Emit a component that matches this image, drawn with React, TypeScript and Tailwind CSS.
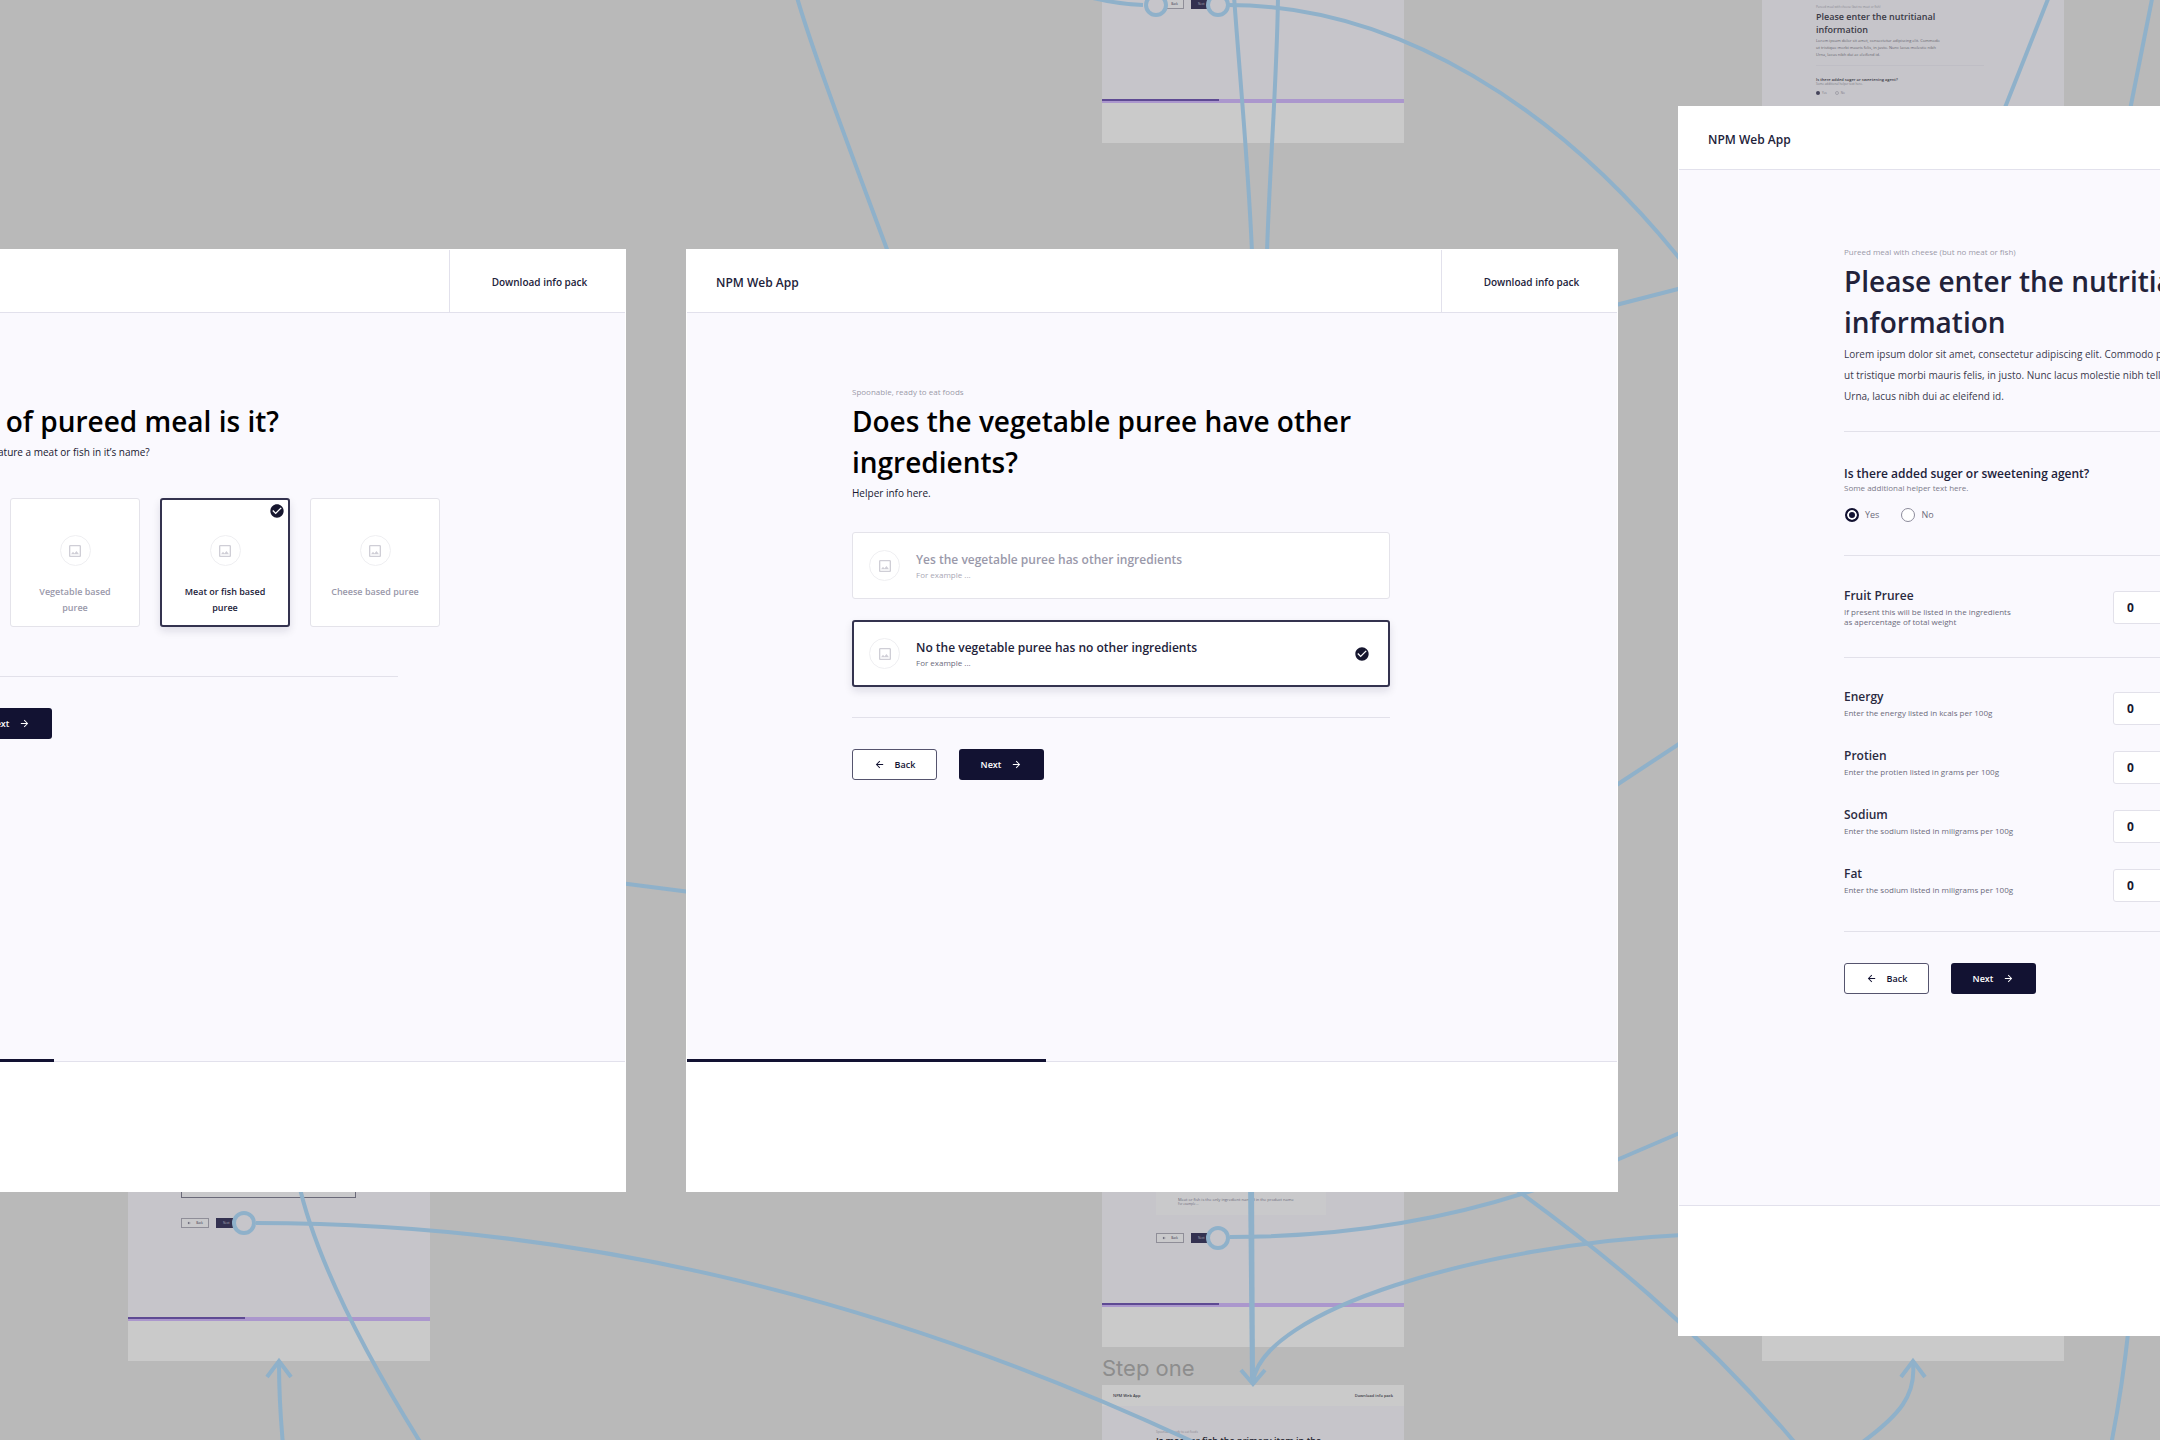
import React from "react";
import {
  MdArrowBack,
  MdArrowForward,
  MdCheckCircle,
  MdOutlineImage,
} from "react-icons/md";

/* ---------- Shared pieces of a board ---------- */

function Board({
  children,
  progress,
  className = "",
  bodyClass = "",
}: {
  children: React.ReactNode;
  progress: number;
  className?: string;
  bodyClass?: string;
}) {
  return (
    <article
      className={`flex w-[932px] shrink-0 flex-col border border-white bg-white ${className}`}
    >
      <header className="flex h-[63px] items-stretch justify-between border-b border-[#e2e1ec]">
        <span className="flex items-center pt-[3px] pl-[29px] text-[12px] font-semibold text-[#22223a]">
          NPM Web App
        </span>
        <a
          href="#info-pack"
          className="flex w-[176px] items-center justify-center border-l border-[#e2e1ec] pt-[3px] pl-1 text-[10px] font-semibold text-[#22223a]"
        >
          Download info pack
        </a>
      </header>
      <div className={`bg-[#faf9fe] pl-[165px] ${bodyClass}`}>
        <div className="w-[538px]">{children}</div>
      </div>
      <div
        role="progressbar"
        aria-label="Progress"
        aria-valuenow={progress}
        className="flex h-[3px] bg-[#faf9fe]"
      >
        <div className="bg-[#121232]" style={{ width: `${progress}%` }} />
        <div className="flex-1 border-b border-[#e2e1ec]" />
      </div>
      <footer className="h-[129px] bg-white" />
    </article>
  );
}

function Caption({ children }: { children: React.ReactNode }) {
  return (
    <p className="mb-[3px] text-[8px] leading-[12px] text-[#9b99a9]">
      {children}
    </p>
  );
}

function Divider({ className = "" }: { className?: string }) {
  return <hr className={`border-t border-[#e2e1ea] ${className}`} />;
}

function NavButtons() {
  return (
    <div className="mt-[31px] flex gap-[22px]">
      <button
        type="button"
        className="flex h-[31px] w-[85px] items-center justify-center gap-[10px] rounded-[3px] border border-[#55546e] bg-white text-[9px] font-semibold text-[#121232]"
      >
        <MdArrowBack className="size-[11px]" aria-hidden />
        Back
      </button>
      <button
        type="button"
        className="flex h-[31px] w-[85px] items-center justify-center gap-[10px] rounded-[3px] bg-[#121232] text-[9px] font-semibold text-white"
      >
        Next
        <MdArrowForward className="size-[11px]" aria-hidden />
      </button>
    </div>
  );
}

function Placeholder() {
  return (
    <span className="flex size-[31px] shrink-0 items-center justify-center rounded-full border border-[#efeff2]">
      <MdOutlineImage className="size-[16px] text-[#cfced6]" aria-hidden />
    </span>
  );
}

const selectedBox =
  "border-2 border-[#34334f] shadow-[0_4px_8px_rgba(20,20,50,0.12)]";
const idleBox = "border border-[#e4e3ea]";

function MealCard({ label, selected }: { label: string; selected?: boolean }) {
  return (
    <label
      className={`relative flex h-[129px] w-[130px] shrink-0 flex-col items-center rounded-[3px] bg-white ${
        selected ? `pt-[35px] ${selectedBox}` : `pt-[36px] ${idleBox}`
      }`}
    >
      <input
        type="radio"
        name="meal"
        defaultChecked={selected}
        className="sr-only"
      />
      <Placeholder />
      {selected && (
        <MdCheckCircle
          className="absolute top-[3px] right-[3px] size-[16px] text-[#17172f]"
          aria-hidden
        />
      )}
      <span
        className={`mt-[18px] w-[92px] text-center text-[9px] leading-[16px] font-semibold ${
          selected ? "text-[#22223a]" : "text-[#9a99aa]"
        }`}
      >
        {label}
      </span>
    </label>
  );
}

function OptionRow({ label, selected }: { label: string; selected?: boolean }) {
  return (
    <label
      className={`flex h-[67px] items-center rounded-[3px] bg-white ${
        selected ? `pr-[18px] pl-[15px] ${selectedBox}` : `px-[16px] ${idleBox}`
      }`}
    >
      <input
        type="radio"
        name="ingredients"
        defaultChecked={selected}
        className="sr-only"
      />
      <Placeholder />
      <span className="ml-[16px] flex flex-1 flex-col">
        <span
          className={`text-[12px] leading-[18px] font-semibold ${
            selected ? "text-[#22223a]" : "text-[#9a99aa]"
          }`}
        >
          {label}
        </span>
        <span
          className={`text-[8px] leading-[12px] ${
            selected ? "text-[#6c6b7c]" : "text-[#a9a8b5]"
          }`}
        >
          For example ...
        </span>
      </span>
      {selected && (
        <MdCheckCircle className="size-[16px] text-[#17172f]" aria-hidden />
      )}
    </label>
  );
}

function Radio({ label, checked }: { label: string; checked?: boolean }) {
  return (
    <label className="flex items-center gap-[6px] text-[9px] leading-[14px] text-[#6c6b7c]">
      <input
        type="radio"
        name="sweetener"
        defaultChecked={checked}
        className="size-[14px] appearance-none rounded-full border border-[#8c8b9b] bg-white checked:border-2 checked:border-[#121232] checked:bg-[#121232] checked:shadow-[inset_0_0_0_2px_#fff]"
      />
      {label}
    </label>
  );
}

function Field({
  id,
  label,
  lines,
}: {
  id: string;
  label: string;
  lines: string[];
}) {
  return (
    <div className="grid grid-cols-2 items-start">
      <div>
        <label
          htmlFor={id}
          className="block text-[12px] leading-[18px] font-semibold text-[#2a2a40]"
        >
          {label}
        </label>
        <p className="mt-[2px] text-[8px] leading-[10px] text-[#6c6b7c]">
          {lines.map((line) => (
            <span key={line} className="block">
              {line}
            </span>
          ))}
        </p>
      </div>
      <input
        id={id}
        type="text"
        defaultValue="0"
        className="mt-1 h-[33px] w-[120px] rounded-[3px] border border-[#e2e1ea] bg-white px-[13px] text-[12px] font-bold text-[#17172f]"
      />
    </div>
  );
}

/* ---------- Dimmed prototype map behind the boards ---------- */

function MiniButtons({ className = "" }: { className?: string }) {
  return (
    <div className={`flex gap-[7px] text-[3px] leading-[3px] ${className}`}>
      <span className="flex h-[10px] w-[28px] items-center justify-center gap-[5px] border border-[#8f8e98] bg-[#c9c9cb] text-[#33324a]">
        <MdArrowBack className="size-[4px]" aria-hidden />
        Back
      </span>
      <span className="flex h-[10px] w-[28px] items-center bg-[#333150] pl-[7px] text-[#a9a8b5]">
        Next
      </span>
    </div>
  );
}

function MiniProgress() {
  return (
    <div className="h-[4px] bg-[#ab97cd]">
      <div className="h-[2px] w-[38.6%] bg-[#5e4a93]" />
    </div>
  );
}

function MiniFrame({
  className,
  children,
}: {
  className: string;
  children?: React.ReactNode;
}) {
  return (
    <div className={`absolute w-[302px] bg-[#c6c5ca] ${className}`}>
      {children}
    </div>
  );
}

const connectors = [
  "M796 -6 C812 50 850 150 888 252",
  "M1234 -4 C1240 80 1248 160 1252 252",
  "M1278 -4 C1277 80 1270 160 1267 252",
  "M1228 5 C1400 5 1560 110 1680 259",
  "M1085 -4 Q1115 4 1143 5",
  "M1612 306 L1682 288",
  "M1612 788 L1682 742",
  "M620 883 L690 892",
  "M1612 1162 L1682 1132",
  "M298 1180 C312 1245 350 1330 422 1445",
  "M256 1223 C560 1223 870 1290 1200 1445",
  "M283 1445 Q279 1400 279 1364",
  "M267 1377 L279 1361 L291 1377",
  "M1250 1180 L1252 1382",
  "M1252 1180 L1253 1382",
  "M1241 1370 L1253 1384 L1265 1370",
  "M1253 1382 C1262 1310 1480 1245 1682 1235",
  "M1230 1237 C1340 1237 1440 1222 1540 1188",
  "M1510 1185 C1600 1250 1700 1330 1796 1444",
  "M1860 1444 C1900 1415 1916 1395 1913 1364",
  "M1901 1377 L1913 1361 L1925 1377",
  "M2050 -6 L2004 110",
  "M2153 -6 L2130 110",
  "M2129 1325 Q2122 1390 2111 1445",
];

function PrototypeMap() {
  return (
    <div className="absolute inset-0" aria-hidden>
      <MiniFrame className="top-0 left-[1102px]">
        <MiniButtons className="-mt-px ml-[54px]" />
        <div className="mt-[90px]">
          <MiniProgress />
        </div>
        <div className="h-[40px] bg-[#cacaca]" />
      </MiniFrame>

      <MiniFrame className="top-0 left-[1762px] h-[110px] pl-[54px]">
        <p className="mt-[5px] text-[3px] leading-[4px] text-[#8a8993]">
          Pureed meal with cheese (but no meat or fish)
        </p>
        <p className="mt-px text-[9px] leading-[13px] font-semibold text-[#3a3a46]">
          Please enter the nutritianal
          <br />
          information
        </p>
        <p className="mt-px text-[4px] leading-[7px] text-[#66656f]">
          Lorem ipsum dolor sit amet, consectetur adipiscing elit. Commodo
          <br />
          ut tristique morbi mauris felis, in justo. Nunc lacus molestie nibh
          <br />
          Urna, lacus nibh dui ac eleifend id.
        </p>
        <div className="mt-[7px] w-[168px] border-t border-[#bfbec5]" />
        <p className="mt-[11px] text-[4px] leading-[6px] font-semibold text-[#3a3a46]">
          Is there added suger or sweetening agent?
        </p>
        <p className="text-[3px] leading-[3px] text-[#7c7b86]">
          Some additional helper text here.
        </p>
        <div className="mt-[5px] flex items-center text-[3px] leading-[4px] text-[#7c7b86]">
          <span className="mr-[2px] size-[4px] rounded-full bg-[#45445a]" />
          Yes
          <span className="mr-[2px] ml-[8px] size-[4px] rounded-full border border-[#a3a2ab]" />
          No
        </div>
      </MiniFrame>

      <MiniFrame className="top-[1180px] left-[128px]">
        <div className="ml-[53px] h-[18px] w-[175px] border border-t-0 border-[#6a6978] bg-[#c9c9cb]" />
        <MiniButtons className="mt-[20px] ml-[53px]" />
        <div className="mt-[89px]">
          <MiniProgress />
        </div>
        <div className="h-[40px] bg-[#cacaca]" />
      </MiniFrame>

      <MiniFrame className="top-[1180px] left-[1102px]">
        <div className="ml-[54px] h-[35px] w-[170px] bg-[#c9c9cb] pt-[17px] pl-[22px] text-[#6c6b7c]">
          <p className="text-[4px] leading-[5px]">
            Meat or fish is the only ingredient named in the product name
          </p>
          <p className="text-[3px] leading-[4px]">For example ...</p>
        </div>
        <MiniButtons className="mt-[18px] ml-[54px]" />
        <div className="mt-[60px]">
          <MiniProgress />
        </div>
        <div className="h-[40px] bg-[#cacaca]" />
      </MiniFrame>

      <div className="absolute top-[1354px] left-[1102px] font-[Inter,sans-serif] text-[22px] leading-[28px] text-[#8d8d8d]">
        Step one
      </div>

      <MiniFrame className="top-[1385px] left-[1102px] h-[80px]">
        <div className="flex h-[21px] items-center justify-between bg-[#cacaca] px-[11px] text-[4px] font-semibold text-[#3a3a46]">
          <span>NPM Web App</span>
          <span>Download info pack</span>
        </div>
        <p className="mt-[24px] ml-[54px] text-[3px] leading-[4px] text-[#8a8993]">
          Spoonable, ready to eat foods
        </p>
        <p className="ml-[54px] text-[9px] leading-[13px] font-semibold whitespace-nowrap text-[#25252f]">
          Is meat or fish the primary item in the
        </p>
      </MiniFrame>

      <div className="absolute top-[1325px] left-[1762px] h-[36px] w-[302px] bg-[#cacaca]" />

      <svg
        className="absolute top-0 left-0 h-[1440px] w-[2160px]"
        viewBox="0 0 2160 1440"
        fill="none"
        stroke="#8fb1ca"
        strokeWidth="4"
      >
        {connectors.map((d) => (
          <path key={d} d={d} />
        ))}
        <g fill="#c6c5ca">
          <circle cx="1156" cy="5" r="10" />
          <circle cx="1218" cy="5" r="10" />
          <circle cx="244" cy="1223" r="10" />
          <circle cx="1218" cy="1238" r="10" />
        </g>
      </svg>
    </div>
  );
}

/* ---------- Page ---------- */

const headingClass = "text-[28px] leading-[41px] font-semibold";

export default function App() {
  return (
    <main className="relative h-screen overflow-hidden bg-[#b9b9b9] font-['Open_Sans',sans-serif]">
      <PrototypeMap />

      <div className="relative -ml-[306px] flex items-start gap-[60px] pt-[106px]">
        <Board progress={38.6} className="mt-[143px]" bodyClass="h-[746px] pt-[73px]">
          <Caption>Pureed meals</Caption>
          <h1 className={`${headingClass} text-black`}>
            What type of pureed meal is it?
          </h1>
          <p className="text-[10px] leading-[21px] whitespace-nowrap text-[#17172f]">
            Does the puree meal name feature a meat or fish in it’s name?
          </p>
          <div className="mt-[35px] flex gap-[20px]">
            <MealCard label="Fruit based puree" />
            <MealCard label="Vegetable based puree" />
            <MealCard label="Meat or fish based puree" selected />
            <MealCard label="Cheese based puree" />
          </div>
          <Divider className="mt-[49px]" />
          <NavButtons />
        </Board>

        <Board progress={38.6} className="mt-[143px]" bodyClass="h-[746px] pt-[73px]">
          <Caption>Spoonable, ready to eat foods</Caption>
          <h1 className={`${headingClass} text-black`}>
            Does the vegetable puree have other ingredients?
          </h1>
          <p className="text-[10px] leading-[21px] text-[#17172f]">
            Helper info here.
          </p>
          <div className="mt-[28px] flex flex-col gap-[21px]">
            <OptionRow label="Yes the vegetable puree has other ingredients" />
            <OptionRow
              label="No the vegetable puree has no other ingredients"
              selected
            />
          </div>
          <Divider className="mt-[30px]" />
          <NavButtons />
        </Board>

        <Board progress={0} bodyClass="h-[1033px] pt-[76px]">
          <Caption>Pureed meal with cheese (but no meat or fish)</Caption>
          <h1 className={`${headingClass} text-[#22223a]`}>
            Please enter the nutritianal
            <br />
            information
          </h1>
          <p className="mt-px text-[10px] leading-[21px] whitespace-nowrap text-[#3a3a4e]">
            Lorem ipsum dolor sit amet, consectetur adipiscing elit. Commodo
            pellentesque
            <br />
            ut tristique morbi mauris felis, in justo. Nunc lacus molestie nibh
            tellus quam.
            <br />
            Urna, lacus nibh dui ac eleifend id.
          </p>
          <Divider className="mt-[24px]" />

          <fieldset className="mt-[33px]">
            <legend className="text-[12px] leading-[18px] font-semibold text-[#22223a]">
              Is there added suger or sweetening agent?
            </legend>
            <p className="text-[8px] leading-[10px] text-[#7c7b8a]">
              Some additional helper text here.
            </p>
            <div className="mt-[15px] flex gap-[22px] pl-px">
              <Radio label="Yes" checked />
              <Radio label="No" />
            </div>
          </fieldset>
          <Divider className="mt-[33px]" />

          <div className="pt-[31px] pb-[30px]">
            <Field
              id="fruit"
              label="Fruit Pruree"
              lines={[
                "If present this will be listed in the ingredients",
                "as apercentage of total weight",
              ]}
            />
          </div>
          <Divider />

          <div className="flex flex-col gap-[22px] pt-[30px] pb-[29px]">
            <Field
              id="energy"
              label="Energy"
              lines={["Enter the energy listed in kcals per 100g"]}
            />
            <Field
              id="protien"
              label="Protien"
              lines={["Enter the protien listed in grams per 100g"]}
            />
            <Field
              id="sodium"
              label="Sodium"
              lines={["Enter the sodium listed in miligrams per 100g"]}
            />
            <Field
              id="fat"
              label="Fat"
              lines={["Enter the sodium listed in miligrams per 100g"]}
            />
          </div>
          <Divider />
          <NavButtons />
        </Board>
      </div>
    </main>
  );
}
